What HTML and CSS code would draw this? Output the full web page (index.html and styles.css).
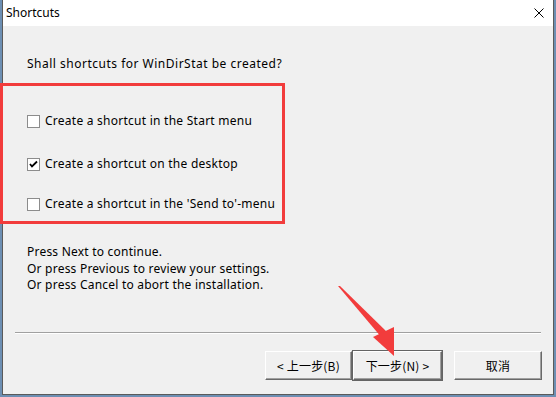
FILE: index.html
```html
<!DOCTYPE html>
<html lang="en">
<head>
  <meta charset="UTF-8">
  <title>Shortcuts</title>
  <link rel="stylesheet" href="styles.css">
</head>
<body>

  <div class="window">
    <div class="titlebar">
      <span class="title">Shortcuts</span>
      <svg class="close" width="10" height="10" viewBox="0 0 10 10">
        <path d="M0.5 0.5 L9.5 9.5 M9.5 0.5 L0.5 9.5" stroke="#000" stroke-width="1" fill="none"/>
      </svg>
    </div>

    <div class="content">
      <p class="question">Shall shortcuts for WinDirStat be created?</p>

      <!-- Shortcut options -->
      <div class="options">
        <label class="option first"><span class="box"></span>Create a shortcut in the Start menu</label>
        <label class="option second"><span class="box"><svg width="11" height="11" viewBox="0 0 11 11"><path d="M2 5 L4 7.5 L9 2.5" stroke="#000" stroke-width="1.8" fill="none"/></svg></span>Create a shortcut on the desktop</label>
        <label class="option third"><span class="box"></span>Create a shortcut in the 'Send to'-menu</label>
      </div>

      <p class="info">
        Press Next to continue.<br>
        Or press Previous to review your settings.<br>
        Or press Cancel to abort the installation.
      </p>
    </div>

    <div class="separator"></div>

    <div class="buttons">
      <button class="btn">&lt; 上一步(B)</button>
      <button class="btn default">下一步(N) &gt;</button>
      <button class="btn cancel">取消</button>
    </div>
  </div>

  <!-- annotation overlays -->
  <div class="highlight"></div>
  <svg class="arrow" width="556" height="397" viewBox="0 0 556 397">
    <polygon points="338,286 340,286 388,333 382,338" fill="#f23c3c"/>
    <polygon points="394,356 373,337 394,327" fill="#f23c3c"/>
  </svg>

</body>
</html>
```

FILE: styles.css
```css
/* Setup dialog over desktop */
html, body {
  margin: 0;
  height: 397px;
  overflow: hidden;
}

body {
  background: #6d8fb3;
  font-family: "Noto Sans", "Noto Sans CJK SC", sans-serif;
  font-size: 12px;
  color: #000;
}

.window {
  margin-left: 2px;
  width: 552px;
  height: 395px;
  box-sizing: border-box;
  border: 1px solid #5a5a5a;
  border-top: none;
  background: #f0f0f0;
  display: flex;
  flex-direction: column;
}

.titlebar {
  height: 26px;
  background: #fff;
  display: flex;
  align-items: center;
  justify-content: space-between;
  padding: 0 9px 0 3px;
}

.title {
  line-height: 16px;
}

.content {
  padding-left: 24px;
}

.question {
  margin: 30px 0 0;
  line-height: 16px;
  letter-spacing: 0.5px;
}

.options {
  display: flex;
  flex-direction: column;
}

.option {
  display: flex;
  align-items: center;
  height: 16px;
  line-height: 16px;
  letter-spacing: 0.25px;
}

.option.first { margin-top: 41px; }
.option.second { margin-top: 27px; }
.option.third { margin-top: 24px; }

.box {
  width: 11px;
  height: 11px;
  border: 1px solid #8c8c8c;
  background: #fff;
  margin-right: 5px;
  display: flex;
  align-items: center;
  justify-content: center;
}

.info {
  margin: 32px 0 0;
  line-height: 16.5px;
  letter-spacing: 0.22px;
}

.separator {
  margin: 38px 12px 0 12px;
  height: 1px;
  background: #a0a0a0;
  border-bottom: 1px solid #fff;
}

.buttons {
  display: flex;
  justify-content: flex-end;
  margin: 17px 11px 0 0;
}

.btn {
  width: 87px;
  height: 29px;
  box-sizing: border-box;
  font-family: "Noto Sans CJK SC", sans-serif;
  font-size: 12px;
  letter-spacing: 0.2px;
  background: #f0f0f0;
  border: 1px solid;
  border-color: #fff #696969 #696969 #fff;
  box-shadow: inset -1px -1px 0 #a0a0a0;
  padding: 0;
}

.btn.default {
  width: 89px;
  outline: 1px solid #646464;
  margin-left: 1px;
}

.btn.cancel {
  width: 88px;
  margin-left: 12px;
}

/* red annotation box and arrow */
.highlight {
  position: absolute;
  left: 0;
  top: 83px;
  width: 279px;
  height: 135px;
  border: 3px solid #f23c3c;
}

.arrow {
  position: absolute;
  left: 0;
  top: 0;
}
```
